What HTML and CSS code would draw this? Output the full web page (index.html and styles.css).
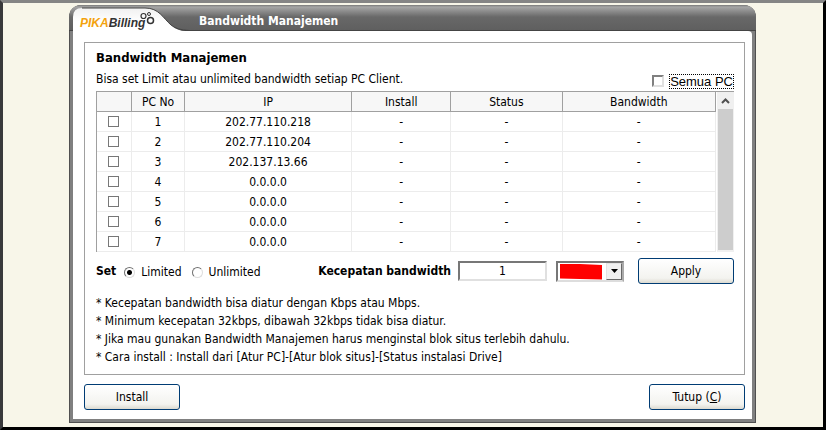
FILE: index.html
```
<!DOCTYPE html>
<html lang="id">
<head>
<meta charset="utf-8">
<title>Bandwidth Manajemen</title>
<link rel="stylesheet" href="styles.css">
</head>
<body>
<main class="window">
  <header class="titlebar">
    <svg class="logo" width="120" height="26" viewBox="0 0 120 26" role="img" aria-label="PIKABilling">
      <defs>
        <linearGradient id="tab" x1="0" y1="0" x2="0" y2="1"><stop offset="0" stop-color="#f0f0f0"/><stop offset=".6" stop-color="#fff"/></linearGradient>
      </defs>
      <path d="M4 26V12Q4 3 13 3H76C90 3 94 13 102 20Q108 26 117 26Z" fill="url(#tab)"/>
      <path d="M13 3H76C90 3 94 13 102 20Q108 25 120 25.500" fill="none" stroke="#444"/>
      <text x="11" y="22" class="logo-text"><tspan class="logo-pika">PIKA</tspan><tspan class="logo-billing">Billing</tspan></text>
      <g fill="none" stroke="#333" stroke-width="1.200"><circle cx="74.500" cy="11" r="2.500"/><circle cx="80" cy="9" r="1.500" stroke-width="1"/><circle cx="81.500" cy="15.500" r="3" stroke-width="1.500"/></g>
    </svg>
    <h1 class="title">Bandwidth Manajemen</h1>
  </header>
  <div class="content">
    <section class="panel">
      <h2 class="heading">Bandwidth Manajemen</h2>
      <div class="intro">
        <p class="intro-text">Bisa set Limit atau unlimited bandwidth setiap PC Client.</p>
        <div class="all"><input class="all-box" type="checkbox" id="all"><label class="all-label" for="all">Semua PC</label></div>
      </div>
      <div class="list">
        <table class="grid">
          <colgroup><col class="c-check"><col class="c-no"><col class="c-ip"><col class="c-install"><col class="c-status"><col class="c-band"></colgroup>
          <thead><tr><th></th><th>PC No</th><th>IP</th><th>Install</th><th>Status</th><th>Bandwidth</th></tr></thead>
          <tbody>
            <tr><td><input class="box" type="checkbox" aria-label="PC 1"></td><td>1</td><td>202.77.110.218</td><td>-</td><td>-</td><td>-</td></tr>
            <tr><td><input class="box" type="checkbox" aria-label="PC 2"></td><td>2</td><td>202.77.110.204</td><td>-</td><td>-</td><td>-</td></tr>
            <tr><td><input class="box" type="checkbox" aria-label="PC 3"></td><td>3</td><td>202.137.13.66</td><td>-</td><td>-</td><td>-</td></tr>
            <tr><td><input class="box" type="checkbox" aria-label="PC 4"></td><td>4</td><td>0.0.0.0</td><td>-</td><td>-</td><td>-</td></tr>
            <tr><td><input class="box" type="checkbox" aria-label="PC 5"></td><td>5</td><td>0.0.0.0</td><td>-</td><td>-</td><td>-</td></tr>
            <tr><td><input class="box" type="checkbox" aria-label="PC 6"></td><td>6</td><td>0.0.0.0</td><td>-</td><td>-</td><td>-</td></tr>
            <tr><td><input class="box" type="checkbox" aria-label="PC 7"></td><td>7</td><td>0.0.0.0</td><td>-</td><td>-</td><td>-</td></tr>
          </tbody>
        </table>
        <div class="scrollbar">
          <button class="scroll-up" type="button" aria-label="Gulir ke atas"><svg width="9" height="6" viewBox="0 0 9 6"><path d="M1 5L4.500 1.500L8 5" fill="none" stroke="#505050" stroke-width="2"/></svg></button>
          <div class="thumb"></div>
        </div>
      </div>
      <form class="controls">
        <div class="mode" role="radiogroup" aria-labelledby="set">
          <span class="strong" id="set">Set</span>
          <input class="radio" type="radio" name="mode" id="limited" checked><label class="radio-label" for="limited">Limited</label>
          <input class="radio" type="radio" name="mode" id="unlimited"><label class="radio-label" for="unlimited">Unlimited</label>
        </div>
        <div class="speed">
          <label class="strong" for="speed">Kecepatan bandwidth</label>
          <input class="field" id="speed" type="text" value="1">
          <div class="combo">
            <select class="unit" aria-label="Satuan"><option></option></select>
            <svg class="mark" width="42" height="16" viewBox="0 0 42 16"><path d="M0 0L20 0L42 1V15.500L20 15L0 14.500Z" fill="red"/></svg>
            <span class="arrow"><svg width="7" height="4" viewBox="0 0 7 4"><path d="M0 0H7L3.500 4Z"/></svg></span>
          </div>
          <button class="button" type="button">Apply</button>
        </div>
      </form>
      <ul class="notes">
        <li>* Kecepatan bandwidth bisa diatur dengan Kbps atau Mbps.</li>
        <li>* Minimum kecepatan 32kbps, dibawah 32kbps tidak bisa diatur.</li>
        <li>* Jika mau gunakan Bandwidth Manajemen harus menginstal blok situs terlebih dahulu.</li>
        <li>* Cara install : Install dari [Atur PC]-[Atur blok situs]-[Status instalasi Drive]</li>
      </ul>
    </section>
    <footer class="footer">
      <button class="button" type="button">Install</button>
      <button class="button" type="button">Tutup (<u>C</u>)</button>
    </footer>
  </div>
</main>
</body>
</html>
```
FILE: styles.css
```
* { box-sizing: border-box; }
body {
  margin: 0;
  min-height: 100vh;
  padding: 2px 67px 4px 66px;
  background: #f8f6e9;
  border: 3px solid;
  border-color: #858585 #000 #000 #39393b;
  font: 12px/18px "DejaVu Sans Condensed", "DejaVu Sans", sans-serif;
  color: #000;
}
h1, h2, p, ul { margin: 0; padding: 0; }
input, button, select { margin: 0; font: inherit; color: inherit; }
.window {
  background: #808080;
  border: 1px solid #505050;
  border-top: 0;
  border-radius: 12px 12px 0 0;
  padding: 0 3px 3px;
}
.titlebar {
  display: flex;
  align-items: center;
  height: 26px;
  margin: 0 -4px;
  border-radius: 12px 12px 0 0;
  background: linear-gradient(#777 0, #a6a6a6 2px, #686868 12px, #5f5f5f 25px, #444 25px);
}
.logo { flex: none; }
.logo-text { font: italic bold 12px "Liberation Sans", sans-serif; }
.logo-pika { fill: #f3a20e; }
.logo-billing { fill: #333; }
.title { margin: 6px 0 0 10px; font-size: 12px; line-height: 18px; color: #fff; }
.content { background: #fff; padding: 11px 7px 9px 11px; border-radius: 0 4px 0 0; }
.panel { border: 1px solid #a0a0a0; padding: 6px 10px 8px 11px; }
.heading { font-size: 13px; line-height: 18px; }
.intro { display: flex; justify-content: space-between; line-height: 24px; height: 24px; }
.all { display: flex; align-items: center; gap: 5px; padding-top: 4px; }
.all-box {
  appearance: none; width: 12px; height: 12px; background: #fff;
  border: 2px solid; border-color: #808080 #e0e0e0 #e0e0e0 #808080;
}
.all-label { font: 13px/13px "Liberation Sans", sans-serif; border: 1px dotted #000; }
.list { display: flex; gap: 1px; border-top: 1px solid #a0a0a0; border-left: 1px solid #a0a0a0; }
.grid { flex: 1; table-layout: fixed; width: 0; border-collapse: separate; border-spacing: 0; }
.c-check { width: 35px; }
.c-no { width: 53px; }
.c-ip { width: 27%; }
.c-install { width: 16%; }
.c-status { width: 18%; }
.grid th {
  height: 20px; padding: 0; font-weight: normal; background: #f7f7f7;
  border-right: 1px solid #a0a0a0; border-bottom: 1px solid #a0a0a0;
}
.grid td {
  height: 20px; padding: 1px 0 0; text-align: center; line-height: 18px;
  border-right: 1px solid #ececec; border-bottom: 1px solid #ececec;
}
.grid td:first-child { padding: 0 2px 0 0; }
.box {
  appearance: none; display: block; width: 11px; height: 11px; margin: 0 auto;
  background: #fff; border: 1px solid #777;
}
.scrollbar { width: 17px; display: flex; flex-direction: column; background: #f0f0f0; padding-bottom: 2px; }
.scroll-up { height: 17px; padding: 0; border: 0; background: #f0f0f0; display: grid; place-items: center; }
.thumb { flex: 1; background: #cdcdcd; margin: 0 1px; }
.controls { display: flex; justify-content: space-between; align-items: center; height: 26px; margin-top: 6px; }
.mode { display: flex; align-items: center; }
.strong { font-weight: bold; }
.radio {
  appearance: none; width: 11px; height: 11px; margin: 2px 6px 0 8px; border-radius: 50%;
  border: 1px solid; border-color: #707070 #ddd #ddd #707070; background: #fff;
}
.radio:checked { background: radial-gradient(circle, #000 2px, #fff 3px); }
.radio-label { margin: 2px 2px 0 0; }
.speed { display: flex; align-items: center; }
.field {
  width: 89px; height: 20px; margin-left: 7px; padding: 0; text-align: center; background: #fff;
  border: 2px solid; border-color: #777 #e0e0e0 #e0e0e0 #777;
}
.combo { position: relative; width: 68px; height: 21px; margin: 0 14px 0 9px; }
.unit {
  appearance: none; display: block; width: 100%; height: 100%; background: #fff;
  border: 2px solid; border-color: #777 #aaa #ddd #777; border-radius: 0;
}
.mark { position: absolute; left: 4px; top: 3px; pointer-events: none; }
.arrow {
  position: absolute; right: 2px; top: 2px; width: 16px; height: 17px;
  display: grid; place-items: center; pointer-events: none; background: #f0f0f0;
  border: 1px solid; border-color: #e3e3e3 #696969 #696969 #e3e3e3;
}
.button {
  width: 96px; height: 26px; padding: 0; border: 1px solid #003c74; border-radius: 3px;
  background: linear-gradient(#fff, #f3f3ef 80%, #dcdad0);
}
.notes { list-style: none; margin-top: 10px; }
.footer { display: flex; justify-content: space-between; margin-top: 9px; }
```
